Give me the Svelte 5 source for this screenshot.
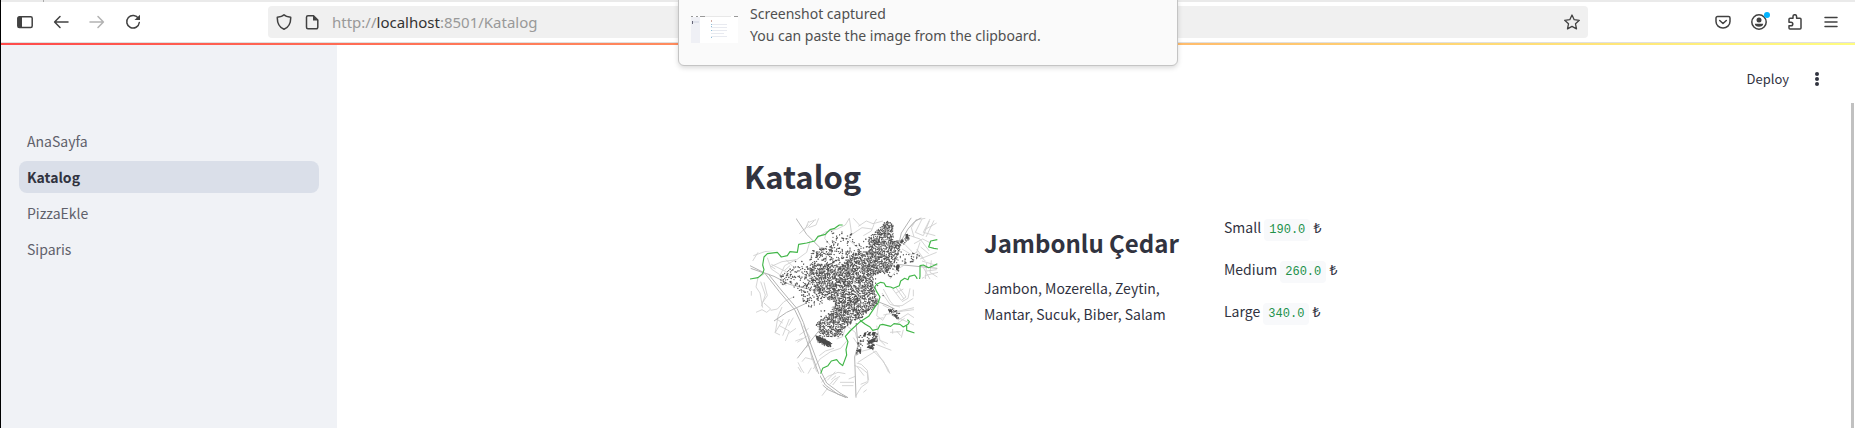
<script>
  const pages = ['AnaSayfa', 'Katalog', 'PizzaEkle', 'Siparis'];
  const current = 'Katalog';
  const sizes = [
    { label: 'Small', price: '190.0' },
    { label: 'Medium', price: '260.0' },
    { label: 'Large', price: '340.0' }
  ];

  // Building blocks of the city map: districts filled with small footprints
  const districts = [
    { fill: 0.78, area: [[432,272],[450,262],[466,240],[486,252],[488,298],[512,308],[502,350],[482,382],[462,402],[430,406],[430,440],[442,488],[412,520],[372,542],[312,588],[276,590],[260,552],[302,512],[314,490],[274,472],[244,440],[236,390],[252,370],[292,368],[330,378],[372,338],[412,332],[414,300]] },
    { fill: 0.4, area: [[232,380],[244,330],[300,318],[370,322],[400,330],[370,350],[330,380],[260,380]] },
    { fill: 0.34, area: [[148,442],[150,408],[190,378],[236,376],[262,400],[250,440],[270,470],[280,486],[240,506],[216,490],[210,452],[172,430]] },
    { fill: 0.16, area: [[282,318],[300,276],[362,276],[378,304],[420,290],[430,330],[330,330]] },
    { fill: 0.22, area: [[484,342],[530,330],[572,350],[544,372],[508,366],[502,400],[474,420],[466,396]] },
    { fill: 1, area: [[258,584],[272,588],[304,610],[298,624],[262,606]] },
    { fill: 0.75, area: [[412,604],[438,576],[440,602],[430,630],[408,620]] },
    { fill: 0.4, area: [[384,590],[412,574],[424,590],[396,612],[390,644],[376,640]] },
    { fill: 0.5, area: [[470,508],[486,504],[508,518],[504,540],[480,524]] },
    { fill: 0.6, area: [[508,304],[534,284],[538,296],[516,316]] },
    { fill: 0.35, area: [[300,520],[330,560],[346,592],[310,588],[262,580],[256,548]] },
    { fill: 0.04, area: [[180,480],[190,360],[300,300],[440,330],[460,480],[380,560],[260,560],[240,500]] }
  ];

  function inside(x, y, area) {
    let hit = false;
    for (let i = 0, j = area.length - 1; i < area.length; j = i++) {
      const [xi, yi] = area[i];
      const [xj, yj] = area[j];
      if (yi > y !== yj > y && x < ((xj - xi) * (y - yi)) / (yj - yi) + xi) hit = !hit;
    }
    return hit;
  }

  let seed = 41;
  function random() {
    seed = (seed * 16807) % 2147483647;
    return seed / 2147483647;
  }

  let buildings = '';
  for (let y = 236; y < 650; y += 4) {
    for (let x = 146; x < 576; x += 4) {
      const fill = Math.max(0, ...districts.filter((d) => inside(x, y, d.area)).map((d) => d.fill));
      if (random() < fill) {
        const px = Math.round(x + random() * 2);
        const py = Math.round(y + random() * 2);
        const w = 3 + Math.round(random());
        const h = 3 + Math.round(random());
        buildings += `M${px} ${py}l${w} 1l-1 ${h}l-${w} -1z`;
      }
    }
  }
</script>

<div class="window">
  <div class="tabstrip"></div>
  <nav class="toolbar" aria-label="Browser">
    <div class="group">
      <button class="tool" aria-label="Sidebar"><svg width="16" height="16" viewBox="0 0 16 16"><rect x=".8" y="2.800" width="14.400" height="10.800" rx="1.500" fill="none" stroke="#414141" stroke-width="1.5" /><path d="M1 3h4v10.400H1z" fill="#414141" /></svg></button>
      <button class="tool" aria-label="Back"><svg width="16" height="16" viewBox="0 0 16 16"><path d="M15 8H2M7 2.500L1.600 8L7 13.500" class="line" /></svg></button>
      <button class="tool faded" aria-label="Forward"><svg width="16" height="16" viewBox="0 0 16 16"><path d="M1 8h13M9 2.500L14.400 8L9 13.500" class="line" /></svg></button>
      <button class="tool" aria-label="Reload"><svg width="16" height="16" viewBox="0 0 16 16"><path d="M13.500 4.600A6.300 6.300 0 1 0 14.300 8.500" class="line" /><path d="M15 .8V6H9.500z" fill="#414141" /></svg></button>
    </div>
    <div class="spring"></div>
    <div class="address">
      <svg width="16" height="16" viewBox="0 0 16 16"><path d="M8 .8C6.500 2.300 4 2.900 1.300 3.200C1.100 8.700 3 13.200 8 15.300C13 13.200 14.900 8.700 14.700 3.200C12 2.900 9.500 2.300 8 .8z" class="line" /></svg>
      <svg width="16" height="16" viewBox="0 0 16 16"><path d="M4 1.700h5.500l4.300 4.300v7.300a1.500 1.500 0 0 1-1.500 1.500H4a1.500 1.500 0 0 1-1.500-1.500V3.200A1.500 1.500 0 0 1 4 1.700z" class="line" /><path d="M9 1.300V6.500h5z" fill="#414141" /></svg>
      <span class="url">http://<b>localhost</b>:8501/Katalog</span>
      <button class="tool star" aria-label="Bookmark"><svg width="16" height="16" viewBox="0 0 16 16"><path d="M8 1L10.200 5.700L15.300 6.300L11.500 9.800L12.500 14.900L8 12.400L3.500 14.900L4.500 9.800L.7 6.300L5.800 5.700z" class="line thin" /></svg></button>
    </div>
    <div class="spring"></div>
    <div class="group">
      <button class="tool" aria-label="Pocket"><svg width="16" height="16" viewBox="0 0 16 16"><path d="M2.500 2.500h11a1.500 1.500 0 0 1 1.500 1.500v3.500a7 6.500 0 0 1-14 0V4a1.500 1.500 0 0 1 1.500-1.500z" class="line" /><path d="M4.700 6.500L8 9.500L11.300 6.500" class="line" /></svg></button>
      <button class="tool account" aria-label="Account"><svg width="16" height="16" viewBox="0 0 16 16"><circle cx="8" cy="8" r="7.200" class="line" /><circle cx="8" cy="6" r="2.500" fill="#414141" /><path d="M3.800 9.800h8.400c0 1.800-1.700 3-4.200 3s-4.200-1.200-4.200-3z" fill="#414141" /></svg><i class="badge"></i></button>
      <button class="tool" aria-label="Extensions"><svg width="16" height="16" viewBox="0 0 16 16"><path d="M2 8.200V5.300Q2 4.300 3 4.300H6V2.500a1.800 1.800 0 0 1 3.600 0V4.300H13Q14 4.300 14 5.300V14Q14 15 13 15H3Q2 15 2 14V11.800H4a1.800 1.800 0 0 0 0-3.600z" class="line" /></svg></button>
      <button class="tool" aria-label="Menu"><svg width="16" height="16" viewBox="0 0 16 16"><path d="M2 3.500h12M2 8h12M2 12.500h12" class="line" /></svg></button>
    </div>
  </nav>
  <div class="decoration"></div>

  <div class="app">
    <aside>
      {#each pages as page}
        <a href="#{page}" class:active={page === current}>{page}</a>
      {/each}
    </aside>
    <main>
      <header>
        <button class="deploy">Deploy</button>
        <button class="more" aria-label="Options"><svg width="16" height="16" viewBox="0 0 16 16"><g fill="#31333f"><circle cx="8" cy="3" r="2" /><circle cx="8" cy="8" r="2" /><circle cx="8" cy="13" r="2" /></g></svg></button>
      </header>
      <section class="block">
        <h1>Katalog</h1>
        <div class="columns">
          <svg class="map" viewBox="42 225 600 600" role="img" aria-label="Jambonlu Çedar">
            <clipPath id="extent"><path d="M198 235H624V420H554V705H454V777H270V705H198V660H120V525H60V335H198z" /></clipPath>
            <g clip-path="url(#extent)">
            <g fill="none" stroke="#cdcdcd" stroke-width="2.500">
              <path d="M208 284l20-18 8-20M236 266l22-8 8-20M258 300l30-22 34-8 24-12 12-20M290 278l-6 20 16 20M358 238l6 40-8 24 30 26M366 286l30-20 30 4M385 262l24-16 20 8 30-8M400 290l24-14 8-20M240 306l-10 34-30 22-44 6-32 14M70 350l34-12 40-6M84 340l-16 26M112 356l12 34 24 16 20 34M104 404l-20 12-6 28 12 18 8 44M92 428l14 40-12 34M102 430l10 40-14 20M64 456v14M124 376l40 20M136 390l-16-10M168 362l20 20M180 380l-16 14 14 20M150 410l14-30 34-18" />
              <path d="M78 520l18-8 14 8 12-10-20-18M122 514l20-4 20-22 28-14M156 504l-12 28-8 48M160 540l-24 40M178 540l-20 50M158 552l-18-12M134 580l16 8M176 560l14-24M148 560l30 16-12 30M178 582l20-14M202 610l28-18M196 606l22-8M208 588l28-20M220 560l20 36-10 30M238 620l8 42M204 670l10 20 8 12M214 700l-10-16M234 704l10-18M250 662l-24-6-10 12M250 690l20-30 32-22 30-10 18-22M268 650l18-14 26-8M246 656l14 42M276 770l18-24M274 730l20-18 30-12 22 4M292 724l24-26M300 736l12-14 18-10M304 722l14-12M308 738l16-20" />
              <path d="M378 650l20-14 32-8M374 680l18 6 20 16 2 28-20 14M380 672l14 4 18 18 4 30M384 670l34-22 20-12 16 24 18 26 8 18M430 636l30 30 16 34M376 712l-20 8M330 730h42M336 740h34M400 760l10-8M392 736l20-8M378 770l16-26M382 684l20 26" />
              <path d="M460 450l20 36 12 14h24l34-22M456 462l24 34 30 8M448 480l-8 50 18 14 12-20M440 540l20-4M458 498l40 20 54-12M460 528l60-12 32-4M504 544l30-20 18 12M500 534l52 24M498 556l26-18M488 450l26 34 14-10-20-28M498 446l24 34M520 450l-22 12M540 448l-6 30-18 10M550 452v20" />
              <path d="M534 270l26-28 26-4M560 240l-16 26 8 28M576 240l-20 40 24 10 18-44M600 240l-20 40 36 10M612 244l-24 50M620 252l-36 20M540 290l30 10 28 36M552 314l26-14 24 12M526 318l20 20M570 310l-10 30 26 26M572 324l24 20M560 330l20 28M516 330l30 18 16-10M500 392l20-12M494 400l-14 20M480 382l20 16M576 366l46 14M580 386l20 34M590 372l-4 50M604 364l-4 36 22 14M570 360l50-20M590 396l30-4M584 410l40-10M576 418l8-4" />
              <path d="M350 560l26 20 4 18M346 566l-6 20M320 600l20-8M440 560l10 44 24 10M446 600l20 20M438 616l46 18M480 580l32-2M500 576l12 14M520 572l-6 24M488 570v14M370 596l12 18M236 250l22-8M224 272l10-16M252 246l-20 20M370 238l20 22M440 240l-10 16" />
            </g>
            <g fill="none" stroke="#b4b4b4" stroke-width="3">
              <path d="M198 238l32 48 44 44M60 380l44 22 28 10 46 24 90 22M62 388l40 14M132 546l38-26 60-28M202 658l48-62 18-22M470 312h40l24-42 20-22 20-12M500 376l122 12M378 552l6 66-10 36 4 122M434 484l40 16 20 10M278 738l16 14 54 24M544 236l-30 46-6 26" />
              <path d="M104 402l44 56 46 54 18 38 18 54 36 100 20 34 38 28 30 10M114 404l42 52 46 54 18 40 18 54 36 96 16 32 40 30 24 14" />
            </g>
            <path d={buildings} fill="#525252" />
            <g fill="#4a4a4a"><path d="M256 588l44 20 4 14-16-4-28-14zM412 606l22-8 2 10-20 8zM414 620l18 6-4 4-18-4zM402 582l8-4-4 16-6-2zM416 580l8-2-6 12-6-2zM428 578l10 2-4 12-10-4zM498 380l6-4 6 4-6 16-6-4zM526 286l8-2 2 12-8 4zM514 304l6-4-2 10-6 2zM474 512l10-2 4 8-10 2zM488 524l16 4-6 10zM380 634l14-4-2 14z" /></g>
            <path d="M440 408l12-6 14 16-26 18zM276 490l30-8 8 14-16 18z" fill="#fff" />
            <g fill="none" stroke="#42b649" stroke-width="3.500" stroke-linejoin="round">
              <path d="M60 420l24-4 14-12 4-12-4-14 4-24 10-10 30-4 12 14 18-4 8-12 22 2 4-24 24-4 24-6 10-14 22-6 14-14 14-4 14-10h10" />
              <path d="M272 704l6-16 16-8 10-14 16-4 8 10 10 8 6-16 6-16-2-16 6-24-8-16 14-16 28-26 28-18 20-30 8-10 6-18-10-16-6-14 6-8 12-6 10 2 6 10 14 2 8 4 18-8 4-14 12-8 10 4 4-10 16-4 6 8 6 20 4-24v-32l10-2 16 8 14-6 12-6" />
              <path d="M390 544l16 12 14 8 8 10 16-4 6-12 8-2 24 6 10-8 18 2 10 8 14-8 4-8-6-6M530 560v14l24 8M622 302l-20 4-6 18 16 4 12 2" />
            </g>
            </g>
          </svg>
          <div class="column">
            <h2>Jambonlu Çedar</h2>
            <p>Jambon, Mozerella, Zeytin, Mantar, Sucuk, Biber, Salam</p>
          </div>
          <div class="column prices">
            {#each sizes as size}
              <p>{size.label} <code>{size.price}</code> ₺</p>
            {/each}
          </div>
        </div>
      </section>
    </main>
  </div>

  <div class="scrollbar"></div>
  <div class="toast" role="status">
    <svg width="47" height="27" viewBox="0 0 47 27"><rect width="47" height="27" fill="#fff" /><rect y="1" width="9" height="26" fill="#eff0f5" /><path d="M0 .5h2M5 .5h2M9 .5h5M43 .5h4" stroke="#999" /><path d="M14 .5h26" stroke="#e8e8e8" /><path d="M1 6h7" stroke="#cfd3e0" stroke-width="1" /><path d="M1 5h1v3h-1z" fill="#667" /><path d="M20 5h1" stroke="#a65b4b" /><path d="M20 8.500h16M20 11.500h16M20 14.500h16M20 17.500h13M20 20.500h16" stroke="#e8eaf0" /><path d="M20 8.500h1M20 10.500h1M20 14.500h1M20 21.500h1" stroke="#8fbfda" /></svg>
    <div>
      <div>Screenshot captured</div>
      <div>You can paste the image from the clipboard.</div>
    </div>
  </div>
</div>

<style>
  :global(body) { margin: 0; background: #fff; }
  .window {
    position: relative;
    display: flex;
    flex-direction: column;
    min-height: 100vh;
    box-sizing: border-box;
    border-left: 1px solid #000;
    overflow: hidden;
    color: #31333f;
    font-family: "Noto Sans CJK SC", "Noto Sans", sans-serif;
    font-size: 14px;
    line-height: 26px;
  }
  button { border: 0; padding: 0; background: none; color: inherit; font: inherit; }
  svg { display: block; flex: none; }
  .tabstrip { height: 2px; margin-left: 42px; background: #eaeaea; border-left: 1px solid #aaa; box-shadow: -42px 0 #eaeaea; }
  .toolbar { display: flex; align-items: center; height: 40px; padding: 0 6px; border-bottom: 1px solid #e0e0e0; }
  .group { display: flex; }
  .tool { position: relative; display: grid; place-items: center; width: 36px; height: 36px; }
  .faded { opacity: 0.4; }
  .spring { flex: 117; }
  .address {
    flex: 1320;
    display: flex;
    align-items: center;
    gap: 12px;
    height: 32px;
    border-radius: 4px;
    background: #f0f0f0;
  }
  .address > svg:first-child { margin-left: 8px; }
  .url { flex: 1; color: #999; font: 15px/20px "Noto Sans", sans-serif; }
  .url b { color: #333; font-weight: 400; }
  .star { width: 32px; }
  .line { fill: none; stroke: #414141; stroke-width: 1.5; stroke-linecap: round; stroke-linejoin: round; }
  .thin { stroke-width: 1.3; }
  .badge { position: absolute; top: 8px; right: 7px; width: 6px; height: 6px; border-radius: 50%; background: #00b3ff; }
  .decoration { height: 2px; background: linear-gradient(90deg, #ff4b4b, #fffd80); }

  .app { flex: 1; display: flex; }
  aside {
    display: flex;
    flex-direction: column;
    gap: 4px;
    flex: none;
    width: 300px;
    padding: 80px 18px 0;
    background: #f0f2f6;
  }
  aside a { padding: 0 8px; border-radius: 8px; color: #5f616b; line-height: 32px; text-decoration: none; }
  aside a.active { background: #dadfe9; color: #31333f; font-weight: 700; }
  main { flex: 1; min-width: 0; }
  header { display: flex; justify-content: flex-end; align-items: center; gap: 20px; height: 68px; padding-right: 30px; }
  .deploy { font-size: 13px; }
  .block { width: 704px; max-width: 100%; margin: 0 auto; padding-top: 41px; }
  h1, h2, p { margin: 0; }
  h1 { font-size: 31px; line-height: 44px; font-weight: 700; }
  .columns { display: flex; gap: 16px; padding-top: 16px; }
  .map { width: 200px; margin-right: 24px; }
  .column { flex: 1; min-width: 0; }
  h2 { padding: 12px 0 15px; font-size: 24px; line-height: 34px; font-weight: 700; white-space: nowrap; }
  .prices { display: flex; flex-direction: column; gap: 16px; }
  code { padding: 4px 5px; border-radius: 4px; background: #f8f9fb; color: #21914a; font: 12px/13px "Liberation Mono", monospace; }

  .scrollbar { position: absolute; top: 103px; right: 1px; bottom: 0; width: 3px; background: #c1c1c1; }
  .toast {
    position: absolute;
    top: -1px;
    left: calc(50% - 250px);
    display: flex;
    gap: 12px;
    box-sizing: border-box;
    width: 500px;
    height: 67px;
    padding: 3px 12px;
    border: 1px solid #c4c4c4;
    border-radius: 0 0 6px 6px;
    background: #fafafa;
    box-shadow: 0 2px 5px rgba(0, 0, 0, 0.15);
    color: #505050;
    font: 14px/22px "Noto Sans", sans-serif;
  }
  .toast svg { margin-top: 13px; }
</style>
